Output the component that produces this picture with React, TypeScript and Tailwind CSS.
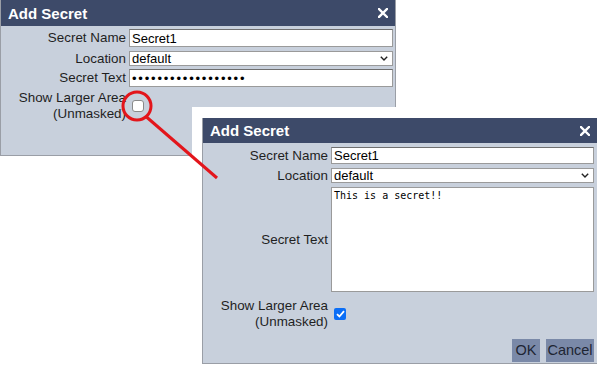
import type { ReactNode } from 'react'

const font = { fontFamily: '"Liberation Sans", Arial, sans-serif' }

function Row({ label, children, className = '' }: { label: ReactNode; children: ReactNode; className?: string }) {
  return (
    <div className={`flex shrink-0 items-center ${className}`}>
      <div className="w-[125px] shrink-0 text-right text-[13.4px] leading-[16px] text-[#1f1f1f]">{label}</div>
      <div className="ml-[3px] flex h-full min-w-0 flex-1 items-center">{children}</div>
    </div>
  )
}

function Header({ className = '' }: { className?: string }) {
  return (
    <div className={`flex items-center justify-between bg-[#3d4a69] pl-[7px] pr-[7px] text-white ${className}`}>
      <span className="text-[15px] font-bold leading-none">Add Secret</span>
      <svg width="10" height="10" viewBox="0 0 10 10" aria-hidden="true">
        <path d="M1 1L9 9M9 1L1 9" stroke="white" strokeWidth="2.4" strokeLinecap="square" />
      </svg>
    </div>
  )
}

function TextBox({ value, className = '' }: { value: string; className?: string }) {
  return (
    <div className={`flex h-full w-full items-center border border-[#9a9a9a] border-t-[#6f6f6f] bg-white px-[2px] text-[13px] leading-none text-black ${className}`}>
      {value}
    </div>
  )
}

function SelectBox() {
  return (
    <div className="flex h-full w-full items-center justify-between border border-[#9a9a9a] bg-white pl-[2px] pr-[4px] text-[13px] leading-none text-black">
      <span>default</span>
      <svg width="8" height="5" viewBox="0 0 8 5" aria-hidden="true">
        <path d="M0.8 0.8L4 4L7.2 0.8" fill="none" stroke="#222" strokeWidth="1.4" />
      </svg>
    </div>
  )
}

function Checkbox({ checked }: { checked: boolean }) {
  return checked ? (
    <span className="ml-[3px] flex h-[12px] w-[12px] items-center justify-center rounded-[2px] bg-[#0b6ef6]">
      <svg width="9" height="8" viewBox="0 0 9 8" aria-hidden="true">
        <path d="M1 4.2L3.4 6.5L8 1.2" fill="none" stroke="white" strokeWidth="1.8" />
      </svg>
    </span>
  ) : (
    <span className="ml-[3px] block h-[12px] w-[12px] rounded-[3px] border border-[#8a8a8a] bg-white" />
  )
}

const showLabel = (
  <>
    Show Larger Area
    <br />
    (Unmasked)
  </>
)

export default function App() {
  return (
    <div className="relative h-[365px] w-[597px] overflow-hidden bg-white" style={font}>
      {/* first dialog, masked */}
      <div className="w-[396px] border-b border-r border-l border-[#9a9ea6] bg-[#c8d0dc]">
        <Header className="h-[26px]" />
        <div className="flex h-[129px] flex-col pr-[2px] pt-[3px]">
          <Row label="Secret Name" className="h-[18px]">
            <TextBox value="Secret1" />
          </Row>
          <Row label="Location" className="mt-[4px] h-[15px]">
            <SelectBox />
          </Row>
          <Row label="Secret Text" className="mt-[3px] h-[18px]">
            <TextBox value={'\u2022'.repeat(18)} className="text-[7px] tracking-[1.8px]" />
          </Row>
          <Row label={showLabel} className="mt-[3px] h-[32px]">
            <Checkbox checked={false} />
          </Row>
        </div>
      </div>

      {/* second dialog, pasted over */}
      <div className="absolute bottom-0 left-[192px] right-0 top-[107px] bg-white pl-[10px] pt-[11px]">
        <div className="h-[246px] border-b border-l border-[#9a9ea6] bg-[#c8d0dc]">
          <Header className="h-[25px]" />
          <div className="flex flex-col pr-[3px] pt-[4px]">
            <Row label="Secret Name" className="h-[17px]">
              <TextBox value="Secret1" />
            </Row>
            <Row label="Location" className="mt-[4px] h-[15px]">
              <SelectBox />
            </Row>
            <Row label="Secret Text" className="mt-[4px] h-[105px]">
              <div
                className="h-full w-full border border-[#9a9a9a] bg-white px-[2px] pt-[2px] text-[10px] leading-[12px] text-black"
                style={{ fontFamily: '"DejaVu Sans Mono", monospace' }}
              >
                This is a secret!!
              </div>
            </Row>
            <Row label={showLabel} className="mt-[6px] h-[32px]">
              <Checkbox checked={true} />
            </Row>
            <div className="mt-[9px] flex justify-end gap-[6px]">
              <button className="h-[23px] w-[28px] bg-[#7a89a8] text-[14.5px] leading-none text-[#1e2533]">OK</button>
              <button className="h-[23px] w-[48px] bg-[#7a89a8] text-[14.5px] leading-none text-[#1e2533]">Cancel</button>
            </div>
          </div>
        </div>
      </div>

      {/* callout */}
      <svg className="pointer-events-none absolute left-0 top-0" width="597" height="365" aria-hidden="true">
        <circle cx="137" cy="106" r="14" fill="none" stroke="#e3151b" strokeWidth="3" />
        <line x1="146.5" y1="117" x2="217" y2="178" stroke="#e3151b" strokeWidth="3" />
      </svg>
    </div>
  )
}
